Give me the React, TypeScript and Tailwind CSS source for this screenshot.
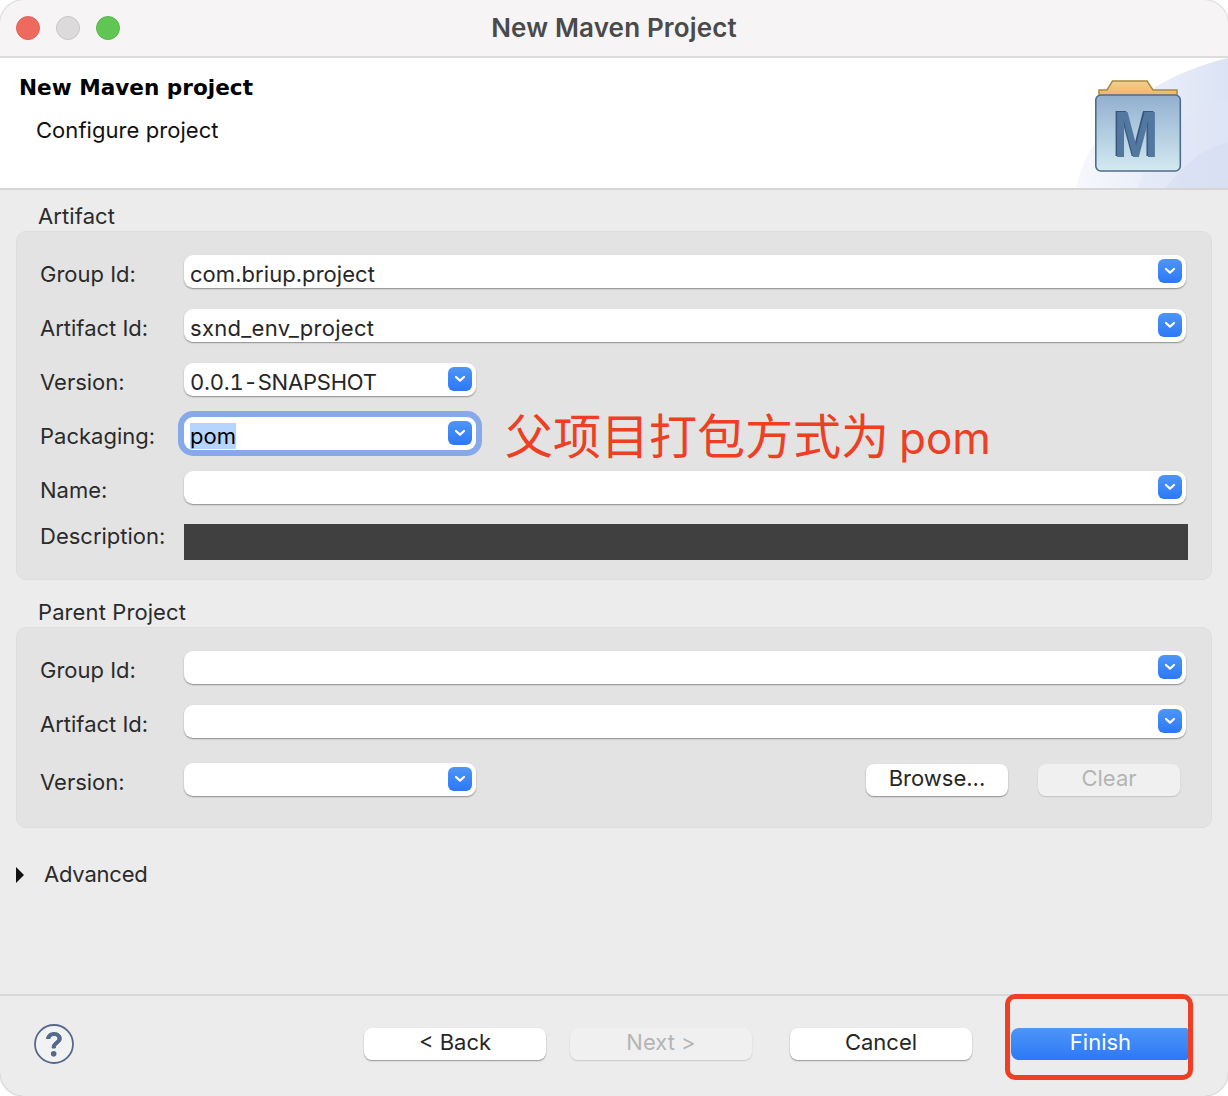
const font = { fontFamily: 'Inter, "Liberation Sans", "Noto Sans CJK SC", sans-serif' };

function Chevron({ className }: { className: string }) {
  return (
    <span className={`flex h-6 w-6 shrink-0 items-center justify-center rounded-[6px] bg-gradient-to-b from-[#4d95f8] to-[#2c78f6] ${className}`}>
      <svg width="12" height="8" viewBox="0 0 12 8" fill="none">
        <path d="M2 2l4 3.6L10 2" stroke="white" strokeWidth="2.2" strokeLinecap="round" strokeLinejoin="round" />
      </svg>
    </span>
  );
}

function Combo({ value = '', className, textClass = '' }: { value?: string; className: string; textClass?: string }) {
  return (
    <div className={`flex h-[33px] items-center rounded-[9px] bg-white pl-[6px] pr-[4px] shadow-[0_1px_1.5px_rgba(0,0,0,0.38)] ${className}`}>
      <span className={`flex-1 pt-1 text-[22px] leading-none text-[#262626] ${textClass}`}>{value}</span>
      <Chevron className="-mt-[2px]" />
    </div>
  );
}

function Row({ label, children, mt }: { label: string; children: React.ReactNode; mt: string }) {
  return (
    <div className={`flex items-center ${mt}`}>
      <span className="w-[167px] pl-[23px] pt-1 text-[22px] leading-none text-[#2b2b2b]">{label}</span>
      {children}
    </div>
  );
}

function Button({ children, className }: { children: React.ReactNode; className: string }) {
  return (
    <div className={`flex h-[32px] items-center justify-center rounded-[8px] text-[22px] leading-none ${className}`}>
      {children}
    </div>
  );
}

function MavenLogo() {
  return (
    <svg width="90" height="96" viewBox="0 0 90 96" className="relative">
      <defs>
        <linearGradient id="body" x1="0" y1="0" x2="0" y2="1">
          <stop offset="0" stopColor="#93afd0" />
          <stop offset="1" stopColor="#d2eaf0" />
        </linearGradient>
        <linearGradient id="tab" x1="0" y1="0" x2="0" y2="1">
          <stop offset="0" stopColor="#f3d091" />
          <stop offset="1" stopColor="#eeb563" />
        </linearGradient>
      </defs>
      <path d="M5 16V10H13L18.500 1H53L59 10H83V16Z" fill="url(#tab)" stroke="#a98a3e" strokeWidth="1.500" />
      <rect x="1.800" y="15" width="84.500" height="76" rx="5" fill="url(#body)" stroke="#4f6c8d" strokeWidth="1.600" />
      <text x="40.500" y="75.500" textAnchor="middle" textLength="45" lengthAdjust="spacingAndGlyphs" fontFamily='"Liberation Sans", sans-serif' fontWeight="700" fontSize="65" fill="#36567f">M</text>
      <text x="42" y="76.500" textAnchor="middle" textLength="45" lengthAdjust="spacingAndGlyphs" fontFamily='"Liberation Sans", sans-serif' fontWeight="700" fontSize="65" fill="#52789f">M</text>
    </svg>
  );
}

export default function App() {
  return (
    <div style={font} className="relative flex h-[1096px] w-[1228px] flex-col overflow-hidden bg-white">
      <div className="flex h-full flex-col overflow-hidden rounded-[24px] bg-[#ececec] shadow-[0_0_2px_rgba(0,0,0,0.45)]">
        {/* Title bar */}
        <div className="relative flex h-[58px] shrink-0 items-center justify-center border-b-2 border-[#dcdcdc] bg-[#f6f4f5]">
          <div className="absolute left-4 top-4 flex gap-[16px]">
            <span className="h-6 w-6 rounded-full border border-[#e2635a] bg-[#ee6a5f]" />
            <span className="h-6 w-6 rounded-full border border-[#c8c6c7] bg-[#dcdadb]" />
            <span className="h-6 w-6 rounded-full border border-[#58b84e] bg-[#61c554]" />
          </div>
          <span className="pb-[2px] text-[26px] font-semibold tracking-[0.15px] text-[#4a4a4a]">New Maven Project</span>
        </div>

        {/* Header */}
        <div className="relative flex h-[132px] shrink-0 justify-between overflow-hidden border-b-2 border-[#d6d6d6] bg-white">
          <svg className="absolute right-0 top-0" width="152" height="130" viewBox="0 0 152 130">
            <defs>
              <linearGradient id="swoosh" x1="0" y1="0" x2="1" y2="0">
                <stop offset="0" stopColor="#f7f8fd" />
                <stop offset="1" stopColor="#dbe3f4" />
              </linearGradient>
            </defs>
            <path d="M0 130C12 70 70 20 152 0V130Z" fill="url(#swoosh)" />
            <path d="M62 130C75 90 110 50 152 40V130Z" fill="#dfe5f5" fillOpacity="0.5" />
            <path d="M90 130C105 110 125 90 152 85V130Z" fill="#d3dcf1" fillOpacity="0.5" />
          </svg>
          <div className="pl-[19px] pt-[15px]">
            <div style={{ fontFamily: '"DejaVu Sans", sans-serif' }} className="text-[21.6px] font-bold leading-[30px] text-black">New Maven project</div>
            <div className="pl-[17px] pt-[13px] text-[22px] leading-[28px] tracking-[0.05px] text-[#111]">Configure project</div>
          </div>
          <div className="relative pr-[44px] pt-[22px]">
            <MavenLogo />
          </div>
        </div>

        {/* Form */}
        <div className="flex flex-1 flex-col px-4 pt-[13px]">
          <div className="pl-[22px] text-[22px] leading-[26px] tracking-[0.1px] text-[#2b2b2b]">Artifact</div>
          <div className="mt-[2px] h-[349px] w-[1196px] rounded-[10px] border border-[#dedede] bg-[#e3e3e3] pt-[23px]">
            <Row label="Group Id:" mt="mt-0"><Combo value="com.briup.project" className="w-[1002px]" textClass="tracking-[0.05px]" /></Row>
            <Row label="Artifact Id:" mt="mt-[21px]"><Combo value="sxnd_env_project" className="w-[1002px]" textClass="tracking-[0.3px]" /></Row>
            <Row label="Version:" mt="mt-[21px]"><Combo value="0.0.1-SNAPSHOT" className="w-[292px]" textClass="tabular-nums tracking-[-0.2px]" /></Row>
            <Row label="Packaging:" mt="mt-[21px]">
              <div className="flex h-[33px] w-[292px] items-center rounded-[9px] bg-white pl-[6px] pr-[4px] ring-[6px] ring-[#85a9e9]">
                <span className="flex-1 pt-1 text-[22px] leading-none text-black">
                  <span className="bg-[#b5d5ff]">pom</span>
                </span>
                <Chevron className="-mt-[2px]" />
              </div>
              <span className="ml-[29px] h-[33px] translate-y-[3px] whitespace-nowrap leading-[33px] text-[#ee3f24]">
                <span className="text-[48px]">父项目打包方式为</span>
                <span className="ml-[10px] text-[44px]">pom</span>
              </span>
            </Row>
            <Row label="Name:" mt="mt-[21px]"><Combo className="w-[1002px]" /></Row>
            <div className="mt-[20px] flex items-start">
              <span className="w-[167px] pl-[23px] pt-[1px] text-[22px] leading-[22px] text-[#2b2b2b]">Description:</span>
              <div className="h-9 w-[1004px] bg-[#404040]" />
            </div>
          </div>

          <div className="mt-[19px] pl-[22px] text-[22px] leading-[26px] tracking-[0.1px] text-[#2b2b2b]">Parent Project</div>
          <div className="mt-[2px] h-[201px] w-[1196px] rounded-[10px] border border-[#dedede] bg-[#e3e3e3] pt-[23px]">
            <Row label="Group Id:" mt="mt-0"><Combo className="w-[1002px]" /></Row>
            <Row label="Artifact Id:" mt="mt-[21px]"><Combo className="w-[1002px]" /></Row>
            <Row label="Version:" mt="mt-[25px]">
              <Combo className="w-[292px]" />
              <Button className="ml-[390px] w-[142px] bg-white pb-[3px] text-[#262626] shadow-[0_1px_1.5px_rgba(0,0,0,0.38)]">Browse...</Button>
              <Button className="ml-[30px] w-[142px] bg-[#f0f0f0] pb-[3px] text-[#b4b4b4] shadow-[0_1px_1.5px_rgba(0,0,0,0.15)]">Clear</Button>
            </Row>
          </div>

          <div className="mt-[33px] flex items-center">
            <svg width="8" height="16" viewBox="0 0 8 16"><path d="M0 0l8 8-8 8z" fill="#111" /></svg>
            <span className="ml-[20px] pb-[2px] text-[22px] leading-[26px] tracking-[-0.2px] text-[#2b2b2b]">Advanced</span>
          </div>
        </div>

        {/* Footer */}
        <div className="flex h-[102px] shrink-0 items-start border-t-2 border-[#d8d8d8] pl-[34px]">
          <svg width="40" height="40" viewBox="0 0 40 40" className="mt-[28px] shrink-0">
            <circle cx="20" cy="20" r="19" fill="#f2f2f2" stroke="#56698c" strokeWidth="1.800" />
            <path d="M12.500 14.500c.5-4 3.700-6 7.500-6 4.300 0 7.300 2.500 7.300 6 0 5-6 5.200-6 9.500h-3.200c0-6 5.700-6.200 5.700-9.500 0-1.800-1.500-3-3.700-3-2.300 0-3.700 1.200-4 3z" fill="#56698c" stroke="#56698c" strokeWidth="1" />
            <circle cx="19.700" cy="29.800" r="2.800" fill="#56698c" />
          </svg>
          <div className="ml-[290px] mt-[32px] flex">
            <Button className="w-[182px] bg-white pb-[5px] text-[#262626] shadow-[0_1px_1.5px_rgba(0,0,0,0.38)]">&lt; Back</Button>
            <Button className="ml-6 w-[182px] bg-[#f0f0f0] pb-[5px] text-[#b4b4b4] shadow-[0_1px_1.5px_rgba(0,0,0,0.15)]">Next &gt;</Button>
            <Button className="ml-[38px] w-[182px] bg-white pb-[5px] text-[#262626] shadow-[0_1px_1.5px_rgba(0,0,0,0.38)]">Cancel</Button>
            <Button className="ml-[39px] w-[177px] rounded-r-[2px] bg-gradient-to-b from-[#4d95f8] to-[#2c78f6] pb-[5px] pl-[2px] text-white">Finish</Button>
          </div>
        </div>
      </div>

      {/* Red annotation box */}
      <div className="absolute left-[1005px] top-[994px] h-[86px] w-[188px] rounded-[10px] border-[5px] border-[#ee3f24]" />
    </div>
  );
}
